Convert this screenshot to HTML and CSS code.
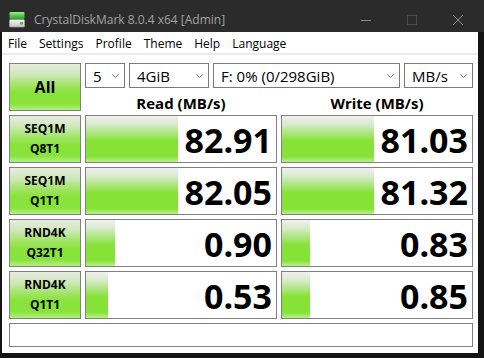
FILE: index.html
```html
<!DOCTYPE html>
<html>
<head>
<meta charset="utf-8">
<title>CrystalDiskMark</title>
<link rel="stylesheet" href="styles.css">
</head>
<body>
<div class="window">
  <header class="titlebar">
    <svg class="app-icon" width="16" height="16" viewBox="0 0 16 16">
      <defs>
        <linearGradient id="ig" x1="0" y1="0" x2="0" y2="1">
          <stop offset="0" stop-color="#9cf28a"/>
          <stop offset="0.45" stop-color="#52d24a"/>
          <stop offset="1" stop-color="#2f9f34"/>
        </linearGradient>
        <linearGradient id="ib" x1="0" y1="0" x2="0" y2="1">
          <stop offset="0" stop-color="#f4f4f4"/>
          <stop offset="1" stop-color="#c8c8c8"/>
        </linearGradient>
      </defs>
      <rect x="0.5" y="0" width="15" height="7" rx="1" fill="url(#ig)"/>
      <rect x="0.5" y="7.5" width="15" height="7.5" rx="1" fill="url(#ib)" stroke="#9a9a9a" stroke-width="0.8"/>
      <rect x="11" y="10" width="3" height="2.5" fill="#3cc43c"/>
    </svg>
    <span class="title">CrystalDiskMark 8.0.4 x64 [Admin]</span>
    <div class="controls">
      <span class="ctl"><svg width="10" height="10" viewBox="0 0 10 10"><path d="M0 5.5H10" stroke="#8c8c8c" stroke-width="1"/></svg></span>
      <span class="ctl"><svg width="10" height="10" viewBox="0 0 10 10"><rect x="0.5" y="0.5" width="9" height="9" fill="none" stroke="#4a4a4a" stroke-width="1"/></svg></span>
      <span class="ctl"><svg width="10" height="10" viewBox="0 0 10 10"><path d="M0 0L10 10M10 0L0 10" stroke="#8c8c8c" stroke-width="1"/></svg></span>
    </div>
  </header>
  <div class="client">
    <nav class="menubar">
      <span class="menu-item">File</span>
      <span class="menu-item">Settings</span>
      <span class="menu-item">Profile</span>
      <span class="menu-item">Theme</span>
      <span class="menu-item">Help</span>
      <span class="menu-item">Language</span>
    </nav>
    <main class="board">
      <div class="btn btn-all">All</div>
      <div class="selects">
        <div class="select sel-count"><span>5</span><svg class="chev" width="7" height="4" viewBox="0 0 7 4"><path d="M0.3 0.3L3.5 3.5L6.7 0.3" fill="none" stroke="#606060" stroke-width="0.9"/></svg></div>
        <div class="select sel-size"><span>4GiB</span><svg class="chev" width="7" height="4" viewBox="0 0 7 4"><path d="M0.3 0.3L3.5 3.5L6.7 0.3" fill="none" stroke="#606060" stroke-width="0.9"/></svg></div>
        <div class="select sel-drive"><span>F: 0% (0/298GiB)</span><svg class="chev" width="7" height="4" viewBox="0 0 7 4"><path d="M0.3 0.3L3.5 3.5L6.7 0.3" fill="none" stroke="#606060" stroke-width="0.9"/></svg></div>
        <div class="select sel-unit"><span>MB/s</span><svg class="chev" width="7" height="4" viewBox="0 0 7 4"><path d="M0.3 0.3L3.5 3.5L6.7 0.3" fill="none" stroke="#606060" stroke-width="0.9"/></svg></div>
      </div>
      <div class="col-head">Read (MB/s)</div>
      <div class="col-head">Write (MB/s)</div>

      <div class="btn btn-test"><span>SEQ1M</span><span>Q8T1</span></div>
      <div class="cell"><div class="bar" style="width:92px"></div><div class="num">82.91</div></div>
      <div class="cell"><div class="bar" style="width:92px"></div><div class="num">81.03</div></div>

      <div class="btn btn-test"><span>SEQ1M</span><span>Q1T1</span></div>
      <div class="cell"><div class="bar" style="width:92px"></div><div class="num">82.05</div></div>
      <div class="cell"><div class="bar" style="width:92px"></div><div class="num">81.32</div></div>

      <div class="btn btn-test"><span>RND4K</span><span>Q32T1</span></div>
      <div class="cell"><div class="bar" style="width:29px"></div><div class="num">0.90</div></div>
      <div class="cell"><div class="bar" style="width:28px"></div><div class="num">0.83</div></div>

      <div class="btn btn-test"><span>RND4K</span><span>Q1T1</span></div>
      <div class="cell"><div class="bar" style="width:22px"></div><div class="num">0.53</div></div>
      <div class="cell"><div class="bar" style="width:28px"></div><div class="num">0.85</div></div>

      <div class="comment"></div>
    </main>
  </div>
</div>
</body>
</html>
```
FILE: styles.css
```css
* { box-sizing: border-box; }
html, body { margin: 0; padding: 0; }
body {
  background: #0c0c0c;
  font-family: "Open Sans", "Noto Sans", sans-serif;
  color: #000;
}
.window {
  width: 484px;
  height: 358px;
  background: #141414;
  display: flex;
  flex-direction: column;
}
.titlebar {
  height: 32px;
  flex: 0 0 32px;
  background: #2b2b2b;
  padding-top: 7px;
  padding-left: 9px;
  display: flex;
  align-items: center;
}
.app-icon { flex: 0 0 16px; margin-right: 9px; }
.title {
  font-size: 12px;
  color: #a3a3a3;
  white-space: nowrap;
}
.controls {
  margin-left: auto;
  margin-right: 3px;
  display: flex;
  align-self: stretch;
  margin-top: -7px;
}
.ctl {
  width: 46px;
  display: flex;
  align-items: center;
  justify-content: center;
  padding-top: 7px;
}
.client {
  margin: 0 6px 0 2px;
  height: 321px;
  background: #fff;
  display: flex;
  flex-direction: column;
}
.menubar {
  height: 23px;
  flex: 0 0 23px;
  border-bottom: 2px solid #ececec;
  display: flex;
  align-items: center;
  padding-top: 2px;
  font-size: 12px;
  color: #000;
}
.menu-item { padding: 0 6px; }
.menu-item:first-child { padding-left: 6px; }
.board {
  padding: 8px 0 0 7px;
  display: grid;
  grid-template-columns: 72px 192px 192px;
  grid-template-rows: 25px 19px 48px 48px 48px 48px 24px;
  column-gap: 4px;
  row-gap: 4px;
}
.btn {
  border: 1px solid #808080;
  background: linear-gradient(to bottom, #e7ece1 0%, #cfe8bb 22%, #9fe461 48%, #88e33b 62%, #88e33b 86%, #b4f083 100%);
  font-weight: 700;
  display: flex;
  flex-direction: column;
  align-items: center;
  justify-content: center;
}
.btn-all {
  grid-row: 1 / span 2;
  grid-column: 1;
  font-size: 16px;
}
.btn-test {
  font-size: 12px;
  line-height: 20px;
}
.selects {
  grid-row: 1;
  grid-column: 2 / span 2;
  display: flex;
  gap: 4px;
}
.select {
  height: 25px;
  border: 1px solid #7a7a7a;
  background: #fff;
  display: flex;
  align-items: center;
  justify-content: space-between;
  padding: 1px 5px 0 7px;
  font-size: 15px;
  white-space: nowrap;
}
.sel-count { flex: 0 0 40px; }
.sel-size { flex: 0 0 80px; }
.sel-drive { flex: 1 1 auto; }
.sel-unit { flex: 0 0 69px; }
.col-head {
  grid-row: 2;
  font-size: 15px;
  font-weight: 700;
  text-align: center;
  line-height: 19px;
  padding-top: 2px;
  white-space: nowrap;
}
.cell {
  border: 1px solid #808080;
  background: #fff;
  display: grid;
  grid-template: 1fr / 1fr;
}
.bar, .num { grid-area: 1 / 1; }
.bar {
  justify-self: start;
  background: linear-gradient(to bottom, #f0f0f0 0%, #dcebd1 16%, #a6e474 40%, #86e236 54%, #86e236 88%, #b8f08c 100%);
}
.num {
  justify-self: end;
  align-self: center;
  font-size: 34px;
  font-weight: 700;
  line-height: 1;
  padding-right: 4px;
  padding-top: 1px;
}
.comment {
  grid-column: 1 / -1;
  border: 1px solid #808080;
  background: #fff;
}
```
